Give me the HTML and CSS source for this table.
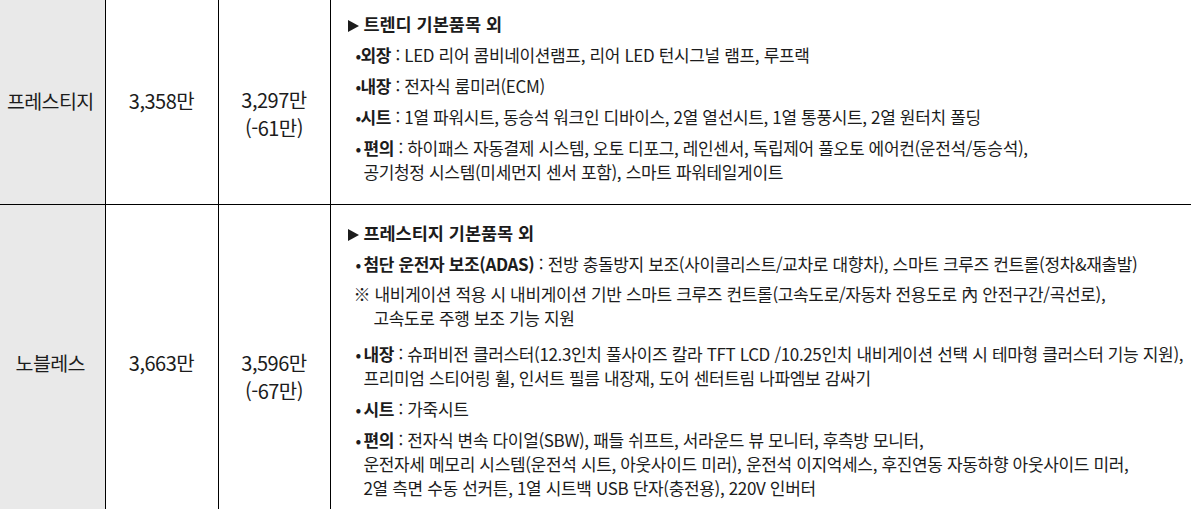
FILE: index.html
```html
<!DOCTYPE html>
<html lang="ko">
<head>
<meta charset="utf-8">
<title>트림별 가격</title>
<link rel="stylesheet" href="styles.css">
</head>
<body>
<table class="trim-table">
  <colgroup>
    <col class="col-trim">
    <col class="col-price">
    <col class="col-sale">
    <col class="col-spec">
  </colgroup>
  <tr>
    <th class="trim">프레스티지</th>
    <td class="price">3,358만</td>
    <td class="price sale">3,297만<br>(-61만)</td>
    <td class="spec">
      <div class="spec-head"><svg class="arrow" width="11" height="12" viewBox="0 0 11 12"><path d="M0 0 L11 6 L0 12 Z"/></svg> 트렌디 기본품목 외</div>
      <div class="item tight"><b>외장</b> : LED 리어 콤비네이션램프, 리어 LED 턴시그널 램프, 루프랙</div>
      <div class="item tight"><b>내장</b> : 전자식 룸미러(ECM)</div>
      <div class="item tight"><b>시트</b> : 1열 파워시트, 동승석 워크인 디바이스, 2열 열선시트, 1열 통풍시트, 2열 원터치 폴딩</div>
      <div class="item"><b>편의</b> : 하이패스 자동결제 시스템, 오토 디포그, 레인센서, 독립제어 풀오토 에어컨(운전석/동승석),<br>공기청정 시스템(미세먼지 센서 포함), 스마트 파워테일게이트</div>
    </td>
  </tr>
  <tr>
    <th class="trim">노블레스</th>
    <td class="price">3,663만</td>
    <td class="price sale">3,596만<br>(-67만)</td>
    <td class="spec">
      <div class="spec-head"><svg class="arrow" width="11" height="12" viewBox="0 0 11 12"><path d="M0 0 L11 6 L0 12 Z"/></svg> 프레스티지 기본품목 외</div>
      <div class="item"><b>첨단 운전자 보조(ADAS)</b> : 전방 충돌방지 보조(사이클리스트/교차로 대향차), 스마트 크루즈 컨트롤(정차&amp;재출발)</div>
      <div class="note">※ 내비게이션 적용 시 내비게이션 기반 스마트 크루즈 컨트롤(고속도로/자동차 전용도로 內 안전구간/곡선로),<br>고속도로 주행 보조 기능 지원</div>
      <div class="item"><b>내장</b> : 슈퍼비전 클러스터(12.3인치 풀사이즈 칼라 TFT LCD /10.25인치 내비게이션 선택 시 테마형 클러스터 기능 지원),<br>프리미엄 스티어링 휠, 인서트 필름 내장재, 도어 센터트림 나파엠보 감싸기</div>
      <div class="item"><b>시트</b> : 가죽시트</div>
      <div class="item"><b>편의</b> : 전자식 변속 다이얼(SBW), 패들 쉬프트, 서라운드 뷰 모니터, 후측방 모니터,<br>운전자세 메모리 시스템(운전석 시트, 아웃사이드 미러), 운전석 이지억세스, 후진연동 자동하향 아웃사이드 미러,<br>2열 측면 수동 선커튼, 1열 시트백 USB 단자(충전용), 220V 인버터</div>
    </td>
  </tr>
</table>
</body>
</html>
```

FILE: styles.css
```css
html, body {
  margin: 0;
  padding: 0;
  background: #ffffff;
  overflow: hidden;
}

body {
  font-family: "Noto Sans CJK KR", "Noto Sans", sans-serif;
  color: #1c1c1c;
}

.trim-table {
  border-collapse: collapse;
  table-layout: fixed;
  width: 1195px;
  margin: -4px 0 0 -4px;
}

.col-trim { width: 109px; }
.col-price { width: 113px; }
.col-sale { width: 112px; }

.trim-table td,
.trim-table th {
  padding: 0;
}

.trim-table td {
  border-left: 1px solid #000;
}

.trim-table tr + tr > td,
.trim-table tr + tr > th {
  border-top: 1px solid #000;
}

.trim {
  background: #e9e9e9;
  font-weight: 400;
  font-size: 19.5px;
  letter-spacing: -0.6px;
  text-align: center;
  vertical-align: middle;
}

.price {
  font-size: 20px;
  letter-spacing: -0.5px;
  text-align: center;
  vertical-align: middle;
}

.trim-table td.sale {
  line-height: 28px;
  padding-top: 28px;
}

.trim-table td.spec {
  vertical-align: top;
  padding: 16px 0 20px 17px;
  font-size: 17px;
  line-height: 24px;
  letter-spacing: -0.35px;
  white-space: nowrap;
}

.spec-head {
  font-weight: 700;
  font-size: 17.5px;
  letter-spacing: 0;
}

.arrow {
  fill: #1c1c1c;
  vertical-align: -1px;
}

.item {
  margin-top: 7px;
  padding-left: 16px;
  text-indent: -8px;
}

.item::before {
  content: "•";
  display: inline-block;
  width: 8px;
  text-indent: 0;
}

.item.tight::before {
  width: 5px;
}

.item b {
  font-weight: 700;
}

.note {
  margin-top: 6px;
  padding-left: 26px;
  text-indent: -20px;
}

.note + .item {
  margin-top: 12px;
}
```
